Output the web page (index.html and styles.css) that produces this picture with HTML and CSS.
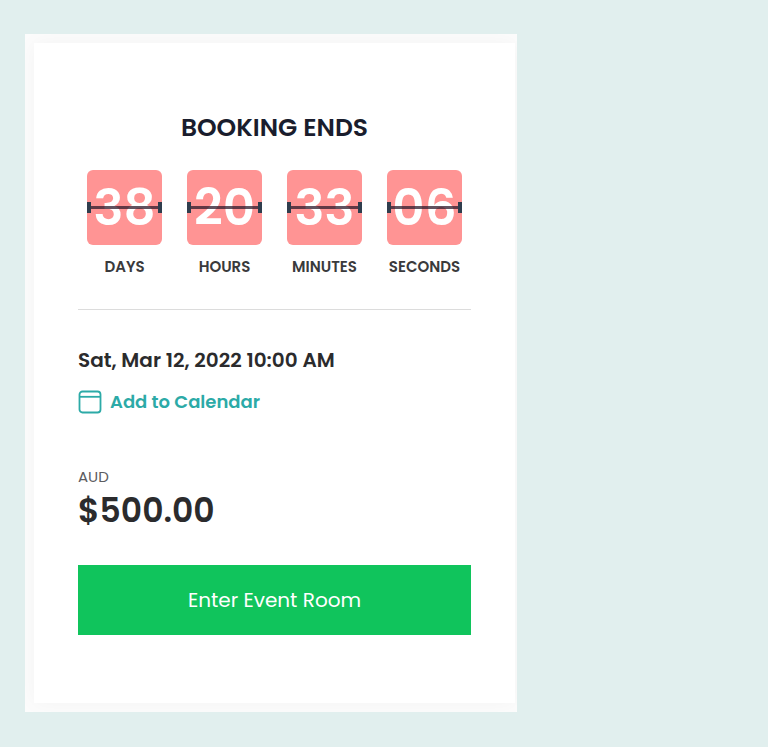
FILE: index.html
```html
<!DOCTYPE html>
<html lang="en">
<head>
  <meta charset="UTF-8">
  <meta name="viewport" content="width=device-width, initial-scale=1.0">
  <title>Event Booking</title>
  <link rel="stylesheet" href="styles.css">
</head>

<body>

  <main class="booking-panel">
    <div class="booking-card">
      <h2>BOOKING ENDS</h2>

      <!-- Countdown -->
      <div class="countdown">
        <div class="unit">
          <div class="flip">38</div>
          <span class="label">DAYS</span>
        </div>
        <div class="unit">
          <div class="flip">20</div>
          <span class="label">HOURS</span>
        </div>
        <div class="unit">
          <div class="flip">33</div>
          <span class="label">MINUTES</span>
        </div>
        <div class="unit">
          <div class="flip">06</div>
          <span class="label">SECONDS</span>
        </div>
      </div>

      <!-- Event details -->
      <div class="details">
        <p class="date">Sat, Mar 12, 2022 10:00 AM</p>
        <a class="calendar-link" href="#">
          <svg width="24" height="24" viewBox="0 0 24 24" fill="none" stroke="currentColor" stroke-width="1.8" aria-hidden="true">
            <rect x="1.5" y="1.5" width="21" height="21" rx="3" />
            <path d="M1.5 6.8h21" />
          </svg>
          Add to Calendar
        </a>
        <p class="currency">AUD</p>
        <p class="price">$500.00</p>
      </div>

      <button class="enter-button" type="button">Enter Event Room</button>
    </div>
  </main>

</body>
</html>
```
FILE: styles.css
```css
* {
  box-sizing: border-box;
}

body {
  margin: 0;
  padding: 34px 25px;
  background-color: #e1efee;
  font-family: Poppins, Inter, sans-serif;
  color: #2b2b2d;
}

h2, p {
  margin: 0;
}

.booking-panel {
  max-width: 492px;
  padding: 9px 2px 9px 9px;
  background-color: #fcfcfc;
  overflow: hidden;
}

.booking-card {
  padding: 68px 44px;
  background-color: #fff;
  box-shadow: 0 0 20px rgba(0, 0, 0, 0.04);
}

h2 {
  font-size: 25px;
  line-height: 34px;
  font-weight: 600;
  color: #1a1d2d;
  text-align: center;
}

/* Countdown */
.countdown {
  display: flex;
  justify-content: space-between;
  padding: 25px 9px 31px;
  border-bottom: 1px solid #dcdcdc;
}

.unit {
  width: 75px;
  display: flex;
  flex-direction: column;
  align-items: center;
}

.flip {
  position: relative;
  width: 75px;
  height: 75px;
  border-radius: 6px;
  background-color: #ff9494;
  color: #fff;
  font-size: 50px;
  line-height: 75px;
  font-weight: 600;
  text-align: center;
}

/* Hinge across the middle of the tile */
.flip::before,
.flip::after {
  content: "";
  position: absolute;
  left: 0;
  right: 0;
}

.flip::before {
  top: 36px;
  height: 3px;
  background-color: rgba(45, 25, 43, 0.75);
}

.flip::after {
  top: 32px;
  height: 11px;
  border: solid #2f3d4d;
  border-width: 0 4px;
}

.label {
  margin-top: 11px;
  font-size: 15px;
  line-height: 22px;
  font-weight: 600;
  color: #3a3a3c;
}

/* Event details */
.details {
  padding: 34px 0 32px;
}

.date {
  font-size: 20px;
  line-height: 32px;
  font-weight: 600;
}

.calendar-link {
  display: flex;
  align-items: center;
  gap: 8px;
  margin-top: 14px;
  font-size: 18px;
  line-height: 24px;
  font-weight: 600;
  color: #2caaa7;
  text-decoration: none;
}

.currency {
  margin-top: 52px;
  font-size: 15px;
  line-height: 22px;
  color: #5c5c60;
}

.price {
  font-size: 33px;
  line-height: 45px;
  font-weight: 600;
}

.enter-button {
  display: block;
  width: 100%;
  height: 70px;
  border: none;
  background-color: #10c45c;
  color: #fff;
  font-family: inherit;
  font-size: 20px;
  font-weight: 400;
  cursor: pointer;
}
```
